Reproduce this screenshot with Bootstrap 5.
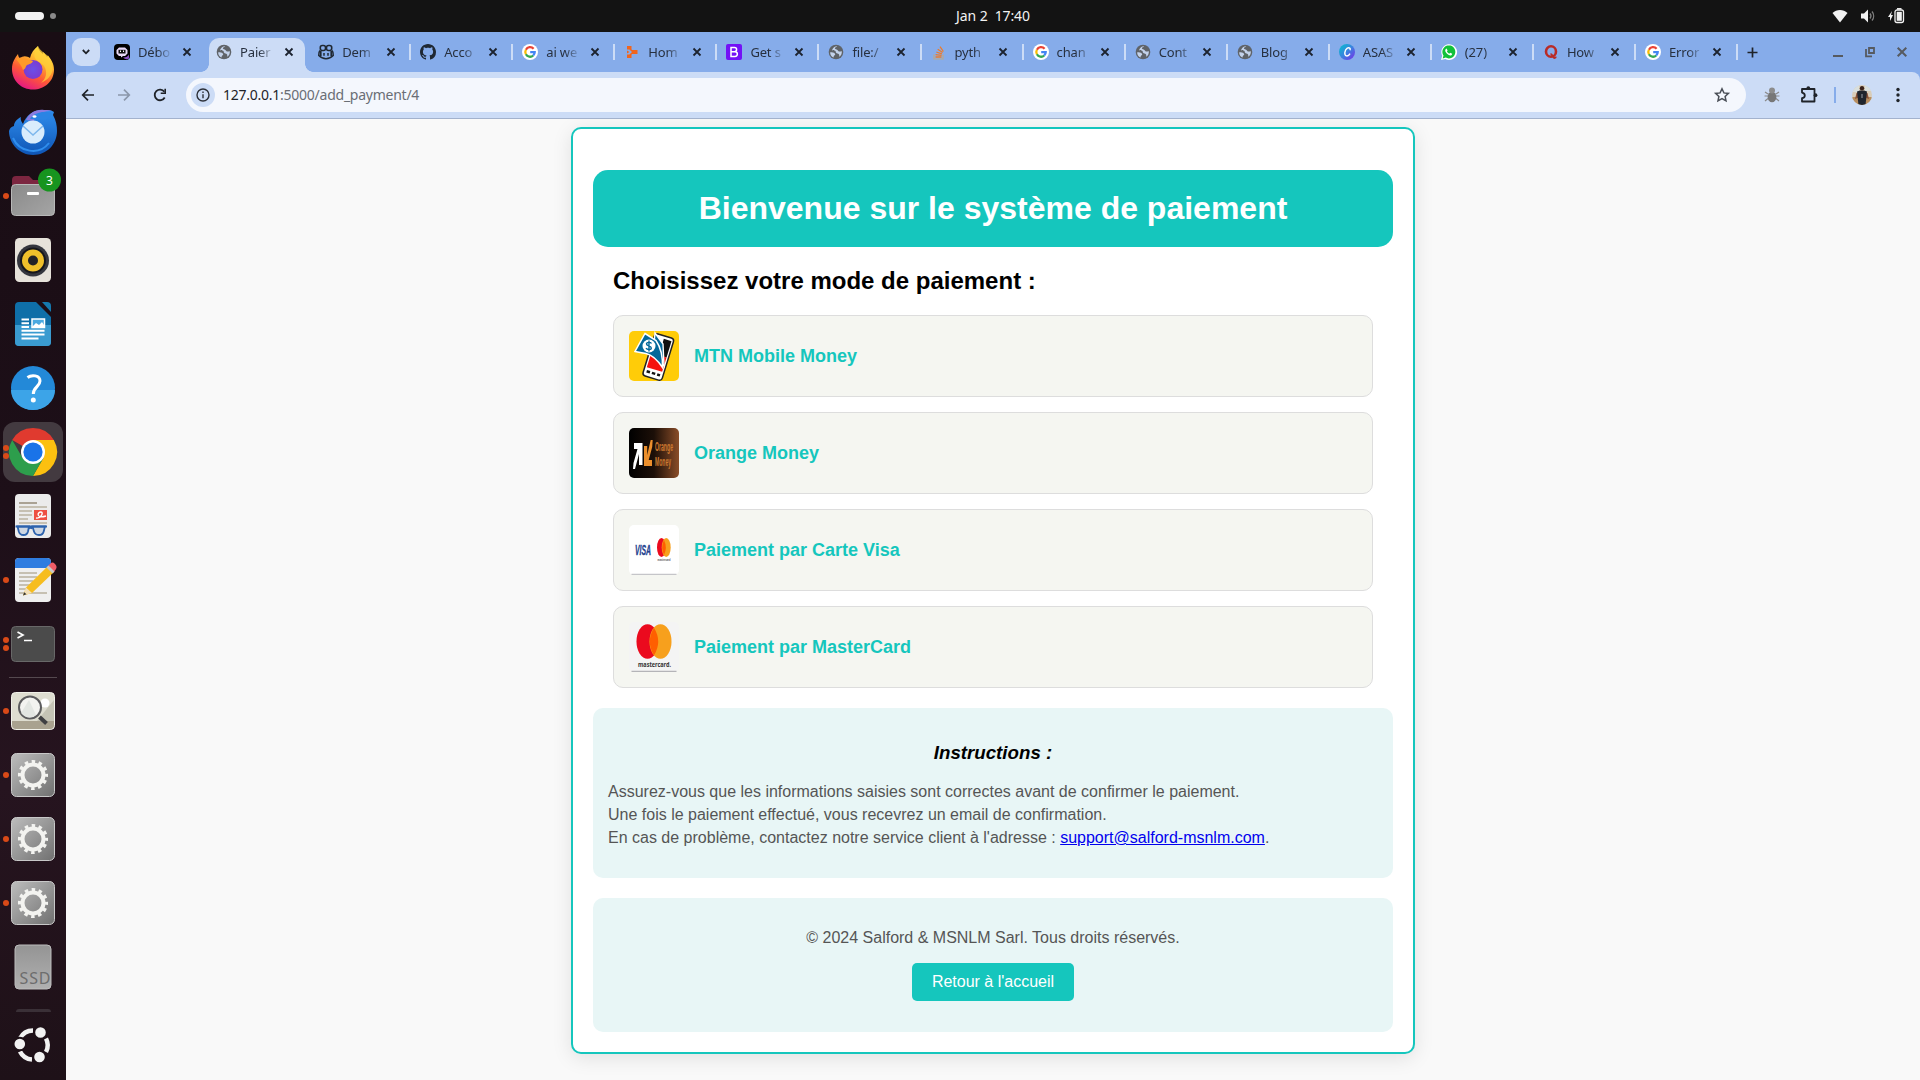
<!DOCTYPE html>
<html lang="fr">
<head>
<meta charset="utf-8">
<meta name="viewport" content="width=device-width, initial-scale=1">
<title>Paiement</title>
<link href="https://cdn.jsdelivr.net/npm/bootstrap@5.3.0/dist/css/bootstrap.min.css" rel="stylesheet">
<style>
  body { width: 1920px; height: 1080px; overflow: hidden; font-family: "Noto Sans", "Open Sans", sans-serif; background: #131313; }
  svg { display: block; flex: none; overflow: visible; }
  .topbar { height: 32px; background: #131313; color: #f2f2f2; font-size: 14px; }
  .topbar .side { width: 300px; }
  .pill { width: 29px; height: 8px; border-radius: 4px; background: #f2f2f2; margin-left: -1px; }
  .pill-dot { width: 6px; height: 6px; border-radius: 50%; background: #8a8a8a; margin-left: 6px; }
  .clock { white-space: pre; letter-spacing: -.1px; padding-bottom: 2px; margin-left: 66px; }
  .status { gap: 12px; padding-right: 16px; }

  .dock { width: 66px; height: 1048px; padding-top: 4px; background: linear-gradient(#190d14, #1d0f18 45%, #26141f 72%, #1e1118); }
  .slot { height: 64px; flex: none; position: relative; }
  .slot.current::before { content: ""; position: absolute; inset: 2px 3px; border-radius: 12px; background: #433a40; }
  .slot svg { position: relative; }
  .run { position: absolute; left: 3px; top: 0; height: 64px; display: flex; flex-direction: column; justify-content: center; gap: 2px; z-index: 2; }
  .run i { width: 6px; height: 6px; border-radius: 50%; background: #d94a18; }
  .dock-line { width: 48px; height: 1px; margin: 1px auto; background: #55494f; flex: none; }
  .dock-peek { width: 35px; height: 3px; margin: 10px auto 0; border-radius: 5px 5px 0 0; background: #3a3037; flex: none; }
  .show-apps { margin-top: 15px; }

  .tabstrip { height: 40px; background: #86acea; }
  .tab-search { width: 28px; height: 28px; border-radius: 9px; background: #ccdcf6; margin-left: 6px; margin-right: 3px; }
  .tab-item { width: 102.07px; height: 40px; padding-left: 11px; position: relative; flex: none; color: #27303f; }
  .tab-item .label { width: 34px; margin-left: 8px; white-space: nowrap; font-size: 13px; letter-spacing: -.15px; line-height: 20px; -webkit-mask-image: linear-gradient(90deg, #000 55%, rgba(0,0,0,.15) 95%); mask-image: linear-gradient(90deg, #000 55%, rgba(0,0,0,.15) 95%); position: relative; }
  .tab-item svg { position: relative; }
  .tab-item .cross { margin-left: 9.5px; }
  .tab-item.ruled::after { content: ""; position: absolute; right: -2px; top: 12px; width: 2px; height: 16px; background: #ccdcf6; }
  .tab-item.front::before { content: ""; position: absolute; left: -4px; right: -6px; top: 6px; bottom: 0;
    background:
      radial-gradient(circle at 0 0, transparent 7.5px, #ccdcf6 8px) left bottom / 8px 8px no-repeat,
      radial-gradient(circle at 100% 0, transparent 7.5px, #ccdcf6 8px) right bottom / 8px 8px no-repeat; }
  .front-fill { position: absolute; left: 4px; right: 2px; top: 6px; bottom: 0; border-radius: 10px 10px 0 0; background: #ccdcf6; }
  .new-tab { margin-left: 11px; }
  .win-buttons { gap: 22px; padding-right: 13px; }
  .toolbar-wrap { background: #86acea; }
  .toolbar { height: 47px; background: #ccdcf6; border-radius: 8px 8px 0 0; border-bottom: 1px solid #a3b2cd; padding-left: 12px; color: #1f2329; }
  .omnibox { width: 1560px; height: 34px; border-radius: 17px; background: #f4f7fd; margin-left: 16px; padding: 0 16px 0 5px; font-size: 14px; }
  .info-badge { width: 24px; height: 24px; border-radius: 50%; background: #ccdcf6; }
  .url { letter-spacing: -.25px; margin-left: 8px; margin-top: -2px; color: #6a6e75; }
  .url b { font-weight: 400; color: #1f2329; }
  .tool-rule { width: 2px; height: 16px; background: #86acea; margin-left: 15px; }

  .viewport { height: 961px; background: #f9f9f9; overflow: hidden; padding-top: 8px; font-family: "Liberation Sans", Arial, sans-serif; color: #000; line-height: 1.44; }
  .pay-card { width: 844px; height: 927px; border: 2px solid #15c6bd; border-radius: 10px; background: #fff; padding: 41px 20px 0; box-shadow: 0 4px 20px rgba(0,0,0,.1); }
  .banner { height: 77px; border-radius: 15px; background: #15c6bd; }
  .banner h1 { font-size: 32px; font-weight: 700; line-height: 37px; }
  .choose { font-size: 24px; font-weight: 700; line-height: 28px; padding: 20px 20px 0; margin: 0 0 20px; }
  .method { height: 82px; border: 1px solid #ddd; border-radius: 10px; background: #f5f6f1; padding: 0 15px; gap: 15px; color: #15c6bd; font-size: 18px; font-weight: 700; text-decoration: none; }
  .method span { padding-top: 2px; }
  .methods { gap: 15px; padding: 0 20px; }
  .panel-soft { border-radius: 10px; background: #e8f6f6; color: #555; font-size: 16px; line-height: 23px; }
  .instructions { height: 170px; padding: 34px 15px 0; margin-top: 20px; }
  .instructions h3 { font-size: 18.72px; font-weight: 700; font-style: italic; color: #000; line-height: 22px; margin-bottom: 16px; }
  .instructions a { color: #0000ee; text-decoration: underline; }
  .page-foot { height: 134px; margin-top: 20px; padding-top: 28px; }
  .btn-home { background: #15c6bd; color: #fff; border: 0; border-radius: 5px; padding: 0; width: 162px; height: 38px; font-size: 16px; line-height: 37px; margin-top: 14px; }
</style>
</head>
<body class="d-flex flex-column">

<svg class="position-absolute" width="0" height="0" aria-hidden="true">
  <defs>
    <linearGradient id="gGrey" x1="0" y1="0" x2="1" y2="1"><stop stop-color="#bdbdbd"/><stop offset="1" stop-color="#707070"/></linearGradient>
    <linearGradient id="gFolder" x1="0" y1="0" x2="1" y2="1"><stop stop-color="#8a8a8a"/><stop offset="1" stop-color="#a5a5a5"/></linearGradient>
    <linearGradient id="gFire" x1=".8" y1="0" x2=".3" y2="1"><stop stop-color="#fff44f"/><stop offset=".35" stop-color="#ffb02e"/><stop offset=".65" stop-color="#ff5a35"/><stop offset="1" stop-color="#e31587"/></linearGradient>
    <radialGradient id="gGlobe"><stop stop-color="#6a4fe8"/><stop offset="1" stop-color="#7b3bd0"/></radialGradient>
    <linearGradient id="gBird" x1="0" y1="0" x2="0" y2="1"><stop stop-color="#2f8eee"/><stop offset="1" stop-color="#0f55b5"/></linearGradient>
    <linearGradient id="gCanva" x1="0" y1="0" x2="1" y2="1"><stop stop-color="#00c4cc"/><stop offset=".5" stop-color="#3b82e0"/><stop offset="1" stop-color="#7d2ae8"/></linearGradient>
    <linearGradient id="gOrange"><stop stop-color="#000"/><stop offset=".5" stop-color="#1c0f08"/><stop offset="1" stop-color="#8a4d28"/></linearGradient>
    <linearGradient id="gSsd" x1="0" y1="0" x2="0" y2="1"><stop stop-color="#949494"/><stop offset="1" stop-color="#b0b0b0"/></linearGradient>
    <clipPath id="cAvatar"><circle cx="10" cy="10" r="10"/></clipPath>

    <symbol id="cross" viewBox="0 0 10 10"><path d="M1.500 1.500l7 7M8.500 1.500l-7 7" stroke="#1c232f" stroke-width="1.800" fill="none"/></symbol>
    <symbol id="globe" viewBox="0 0 16 16"><circle cx="8" cy="8" r="7.300" fill="#5f6368"/><path d="M2.200 8.200c2 0 3.600.2 4.600 1.200.9.900.2 1.700-.6 2.200-.6.400-.5 1.400-.6 2C3.400 12.500 2 10.500 2.200 8.200zM9.200 2.200c-.5 1-2 .8-2.300 1.900-.2.900.9 1.200 1.700 1.400 1.500.3 1.100 1.700 2.300 2 1.200.3 1.900-.5 2.900-.2.300 2.200-.7 4.300-2.500 5.500-.4-.8.400-1.800-.4-2.600-.7-.7-2.200-.3-2.800-1.400-.5-1-.1-1.600-1-2.100-.9-.4-2.100.1-3-.7C5 3.600 7 2 9.200 2.200z" fill="#c3d2ea"/></symbol>
    <symbol id="google" viewBox="0 0 16 16"><circle cx="8" cy="8" r="8" fill="#fff"/><g fill="none" stroke-width="2.300"><path d="M11.600 4.800A4.700 4.700 0 0 0 3.900 5.700" stroke="#ea4335"/><path d="M3.900 5.700a4.700 4.700 0 0 0 0 4.600" stroke="#fbbc05"/><path d="M3.900 10.300a4.700 4.700 0 0 0 7.300 1.200" stroke="#34a853"/><path d="M11.200 11.500A4.700 4.700 0 0 0 12.700 8.200H8.200" stroke="#4285f4"/></g></symbol>
    <symbol id="gear" viewBox="0 0 44 44"><rect x=".5" y=".5" width="43" height="43" rx="5" fill="url(#gGrey)" stroke="#c8c8c8"/><circle cx="22" cy="22" r="10.500" fill="none" stroke="#f3f3f0" stroke-width="4"/><circle cx="22" cy="22" r="13.400" fill="none" stroke="#f3f3f0" stroke-width="3.300" stroke-dasharray="3.508 3.508" stroke-dashoffset="1.750"/></symbol>
  </defs>
</svg>

<header class="topbar d-flex align-items-center justify-content-between flex-shrink-0">
  <div class="side d-flex align-items-center ps-3"><span class="pill"></span><span class="pill-dot"></span></div>
  <div class="clock">Jan 2  17:40</div>
  <div class="side status d-flex align-items-center justify-content-end">
    <svg width="16" height="16" viewBox="0 0 16 16"><path d="M8 14.500L.5 5C4.500 1 11.500 1 15.500 5z" fill="#f2f2f2"/></svg>
    <svg width="16" height="16" viewBox="0 0 16 16"><path d="M1 5.500h3L8 1.500v13l-4-4H1z" fill="#f2f2f2"/><path d="M10 5.500a4 4 0 0 1 0 5M12 3.500a7 7 0 0 1 0 9" stroke="#808080" stroke-width="1.300" fill="none"/></svg>
    <svg width="16" height="16" viewBox="0 0 16 16"><path d="M4 3L0 9h2v4l3-6H3z" fill="#f2f2f2"/><rect x="7" y="2" width="8.500" height="12.500" rx="2" fill="none" stroke="#f2f2f2" stroke-width="1.300"/><rect x="8.700" y="3.800" width="5.100" height="9" fill="#f2f2f2"/><path d="M9 .8h4.500" stroke="#f2f2f2" stroke-width="1.500"/></svg>
  </div>
</header>

<div class="d-flex">
  <aside class="dock d-flex flex-column flex-shrink-0">
    <div class="slot d-flex align-items-center justify-content-center">
      <svg width="44" height="44" viewBox="0 0 44 44"><path d="M1 23C1 16 4 12 7 8c.2 2 1 3.500 2 4.500C12 9 16 10 19 12c1-5 4-9 8-12 0 4 3 6 5 8l.5-2c1 2 2.500 3 3.500 5l1-1.500c3 4 6 8 6 14 0 12-9.500 20-21 20S1 35 1 23z" fill="url(#gFire)"/><circle cx="22" cy="23.500" r="9.500" fill="url(#gGlobe)"/><path d="M5 13c4-2 8-2 10 0l7 2c-1 3-4 3-6 4-2 2-1 4-4 5-1-4-4-7-7-11z" fill="#ff9a28"/><path d="M24 6c-3 8 5 9 9 14 4 6 2 13-3 17 13-6 15-17 7-27-3-3-8-5-10-10z" fill="#ffd23a" opacity=".75"/></svg>
    </div>
    <div class="slot d-flex align-items-center justify-content-center">
      <svg width="48" height="48" viewBox="0 0 48 48"><path d="M0 23c1-3 2-4 5-5 0-4 3-7 7-9-1 3 1 5 2 7C17 7 25 1 35 2c4 0 7 0 10 2l-1 3c3 5 4 11 4 16 0 13-10 24-24 24C11 47 0 36 0 23z" fill="url(#gBird)"/><path d="M17 12C20 5 27 1 35 2c3 0 6 0 8 1-10-1-17 5-18 10z" fill="#8a7be0"/><path d="M21 11C24 6 30 4 35 4c3 0 6 0 8 1l-1 3-6 4z" fill="#2a84e4"/><circle cx="24" cy="24" r="11.500" fill="#d9ecfc"/><path d="M14 18l10 9 10-9" fill="none" stroke="#7db7ec" stroke-width="1.500"/><ellipse cx="25.500" cy="8.500" rx="2" ry="1.200" fill="#fff"/><path d="M4 30c6 14 26 18 36 5" stroke="#2f8eee" stroke-width="2" fill="none"/></svg>
    </div>
    <div class="slot d-flex align-items-center justify-content-center"><span class="run"><i></i></span>
      <svg width="44" height="44" viewBox="0 0 44 44"><path d="M1 6q0-4 4-4h13l4 4h17q4 0 4 4v14H1z" fill="#7c2640"/><rect x=".5" y="10.500" width="43" height="31" rx="4" fill="url(#gFolder)" stroke="#b8b8b8"/><rect x="16" y="18" width="12" height="3" rx="1" fill="#fff"/><circle cx="38.500" cy="6" r="11.500" fill="#17941f"/><text x="38.500" y="10.500" font-size="12" fill="#fff" text-anchor="middle">3</text></svg>
    </div>
    <div class="slot d-flex align-items-center justify-content-center">
      <svg width="38" height="46" viewBox="0 0 38 46"><rect x="1" y="1" width="36" height="44" rx="4.500" fill="#e6e2da"/><circle cx="19" cy="23.500" r="16" fill="#34363e"/><circle cx="19" cy="23.500" r="12" fill="#efc02b" stroke="#16171c" stroke-width="2"/><circle cx="19" cy="23.500" r="5" fill="#222226"/></svg>
    </div>
    <div class="slot d-flex align-items-center justify-content-center">
      <svg width="38" height="46" viewBox="0 0 38 46"><path d="M1 5q0-4 4-4h17l15 15v25q0 4-4 4H5q-4 0-4-4z" fill="#0f6fa8"/><path d="M1 24h36v17q0 4-4 4H5q-4 0-4-4z" fill="#3a9bd0"/><path d="M28 1h5q4 0 4 4v6z" fill="#1579ae"/><path d="M7.500 18.500H15M7.500 22.300H15M7.500 26H15M7.500 29.800h23M7.500 33.500h23M7.500 37.500h17" stroke="#fff" stroke-width="1.900"/><rect x="18" y="18" width="12.500" height="8.500" fill="#4ba9e0" stroke="#fff" stroke-width="1.500"/><path d="M18 26l4-4 3 2 3-3 2 3v2z" fill="#fff"/></svg>
    </div>
    <div class="slot d-flex align-items-center justify-content-center">
      <svg width="44" height="44" viewBox="0 0 44 44"><circle cx="22" cy="22" r="22" fill="#2389d8"/><path d="M0 24a22 20 0 0 0 44 0z" fill="#3ca4e8"/><path d="M16.500 11.500c4-3 12.500-2.500 12.500 3.500 0 5.500-6.700 6-6.700 13" stroke="#fff" stroke-width="3" fill="none"/><circle cx="22.300" cy="34" r="2.500" fill="#fff"/></svg>
    </div>
    <div class="slot current d-flex align-items-center justify-content-center"><span class="run"><i></i><i></i></span>
      <svg width="48" height="48" viewBox="0 0 48 48"><path d="M24 24L3.200 12a24 24 0 0 1 41.600 0z" fill="#e03a2f"/><path d="M24 12h20.800A24 24 0 0 1 24 48L34.400 30z" fill="#fcc010"/><path d="M34.400 30L24 48A24 24 0 0 1 3.200 12l10.400 18z" fill="#2d9e4c"/><circle cx="24" cy="24" r="12" fill="#fff"/><circle cx="24" cy="24" r="9.600" fill="#1a73e8"/></svg>
    </div>
    <div class="slot d-flex align-items-center justify-content-center">
      <svg width="38" height="46" viewBox="0 0 38 46"><rect x="1" y="1" width="36" height="44" rx="4" fill="#ebebeb"/><path d="M5 10h18" stroke="#aaa294" stroke-width="2"/><path d="M5 14h28M5 18h13M5 22h13M5 26h9M5 30h28" stroke="#c6c0b2" stroke-width="2"/><rect x="20" y="17" width="13" height="10" fill="#ee4f42"/><path d="M22 25c5 1 8-6 5-6-4 0-5 7 5 4" stroke="#fff" stroke-width="1.400" fill="none"/><g fill="#cdd6e2" stroke="#2c62ad" stroke-width="1.800"><path d="M3.500 33.500h11.500l-1 5q-.8 3.500-4.500 3.500t-4.700-3.500z"/><path d="M18.500 33.500H31l-1.300 5q-.8 3.500-4.700 3.500t-5-3.500z"/><path d="M1.500 33.500h31.500M15 35.500q1.800-1.500 3.500 0" fill="none"/></g></svg>
    </div>
    <div class="slot d-flex align-items-center justify-content-center"><span class="run"><i></i></span>
      <svg width="38" height="46" viewBox="0 0 38 46"><rect x="1" y="1" width="36" height="44" rx="4" fill="#efefef"/><path d="M1 11V5q0-4 4-4h28q4 0 4 4v6z" fill="#2f7de0"/><path d="M5 16h18M5 20h18M5 24h14M5 28h14M5 32h7M5 36h28" stroke="#c6c0b2" stroke-width="1.800"/><path d="M9 38.500l3-8L34 9l6 6-22 21z" fill="#f6bd1f"/><path d="M9 38.500l3-8 6 5.500z" fill="#f3dfb8"/><path d="M9 38.500l1.200-3.300 2.300 2z" fill="#333"/><path d="M34 9l2.500-2.500q2-2 4.500.5t1 5L40 15z" fill="#ef5d68"/><path d="M32.500 10.500l6 6 2-2-6-6z" fill="#c9c9c9"/></svg>
    </div>
    <div class="slot d-flex align-items-center justify-content-center"><span class="run"><i></i><i></i></span>
      <svg width="44" height="36" viewBox="0 0 44 36"><rect x=".5" y=".5" width="43" height="35" rx="4" fill="#4b4b4b" stroke="#686868"/><path d="M6.500 6l5.500 3-5.500 3M13 14.500h8" stroke="#fff" stroke-width="1.700" fill="none"/></svg>
    </div>
    <div class="dock-line"></div>
    <div class="slot d-flex align-items-center justify-content-center"><span class="run"><i></i></span>
      <svg width="44" height="38" viewBox="0 0 44 38"><rect x=".5" y=".5" width="43" height="37" rx="4" fill="#deddd0" stroke="#f0f0e8"/><path d="M26 29L43 8v21z" fill="#c5c4b5"/><path d="M1 29h42v4q0 4-4 4H5q-4 0-4-4z" fill="#a9a28f"/><circle cx="34" cy="11" r="4.500" fill="#fff"/><circle cx="19" cy="15.500" r="11" fill="#f3f3f0" stroke="#5c5c5e" stroke-width="2"/><path d="M10 21l8-13 7 15q-8 6-15-2z" fill="#e3e6e2"/><path d="M28.500 25l7 6.500" stroke="#3f3f42" stroke-width="4"/></svg>
    </div>
    <div class="slot d-flex align-items-center justify-content-center"><span class="run"><i></i></span><svg width="44" height="44"><use href="#gear"/></svg></div>
    <div class="slot d-flex align-items-center justify-content-center"><span class="run"><i></i></span><svg width="44" height="44"><use href="#gear"/></svg></div>
    <div class="slot d-flex align-items-center justify-content-center"><span class="run"><i></i></span><svg width="44" height="44"><use href="#gear"/></svg></div>
    <div class="slot d-flex align-items-center justify-content-center">
      <svg width="38" height="46" viewBox="0 0 38 46"><rect x="1" y="1" width="36" height="44" rx="4" fill="url(#gSsd)" stroke="#bcbcbc"/><text x="5.500" y="39.500" font-size="16" textLength="31" fill="#6d6d6d">SSD</text></svg>
    </div>
    <div class="dock-peek"></div>
    <svg class="show-apps mx-auto" width="36" height="36" viewBox="0 0 36 36"><g fill="none" stroke="#f2f2f2" stroke-width="4.500"><path d="M5 11.500A14.500 14.500 0 0 1 18 3.500"/><path d="M31 11.500A14.500 14.500 0 0 1 31 25"/><path d="M5 24.500a14.500 14.500 0 0 0 12 8"/></g><circle cx="25.500" cy="5.500" r="6.300" fill="#f2f2f2" stroke="#1e1118" stroke-width="2"/><circle cx="4.800" cy="17" r="6.300" fill="#f2f2f2" stroke="#1e1118" stroke-width="2"/><circle cx="24.500" cy="30" r="6.300" fill="#f2f2f2" stroke="#1e1118" stroke-width="2"/></svg>
  </aside>

  <div class="flex-grow-1">
    <div class="tabstrip d-flex align-items-center">
      <div class="tab-search d-flex align-items-center justify-content-center"><svg width="8" height="6" viewBox="0 0 8 6"><path d="M.8 1L4 4.300 7.200 1" stroke="#1f2329" stroke-width="1.800" fill="none"/></svg></div>

      <div class="tab-item d-flex align-items-center"><svg width="16" height="16" viewBox="0 0 16 16"><rect width="16" height="16" rx="4" fill="#000"/><path d="M5 3.500h6l2.500 2.500v3.500L11 12H9l-2 1.500V12H5L2.500 9.500V6z" fill="#e9d9f7"/><rect x="4.500" y="5.800" width="7" height="3.700" fill="#111"/><path d="M6.500 6.500v1.500M9.500 6.500v1.500" stroke="#fff"/><path d="M9 13.500q4 .5 6-3v4q-3 2-6-1z" fill="#8b50c5"/></svg><span class="label">Débo</span><svg class="cross" width="10" height="10"><use href="#cross"/></svg></div>
      <div class="tab-item front d-flex align-items-center"><span class="front-fill"></span><svg width="16" height="16"><use href="#globe"/></svg><span class="label">Paier</span><svg class="cross" width="10" height="10"><use href="#cross"/></svg></div>
      <div class="tab-item ruled d-flex align-items-center"><svg width="16" height="16" viewBox="0 0 16 16"><g fill="none" stroke="#1f2833" stroke-width="1.600"><rect x="2.300" y="1.500" width="5.200" height="5" rx="2"/><rect x="8.500" y="1.500" width="5.200" height="5" rx="2"/><path d="M2 6.500Q.6 8 .8 11.500 4 14.700 8 14.700t7.200-3.200Q15.400 8 14 6.500M2.800 7v5M13.200 7v5"/></g><path d="M6 9v2.800M10 9v2.800" stroke="#1f2833" stroke-width="1.500"/></svg><span class="label">Dem</span><svg class="cross" width="10" height="10"><use href="#cross"/></svg></div>
      <div class="tab-item ruled d-flex align-items-center"><svg width="16" height="16" viewBox="0 0 16 16"><path fill="#1f2833" d="M8 0C3.580 0 0 3.580 0 8c0 3.540 2.290 6.530 5.470 7.590.4.070.55-.17.55-.38 0-.19-.01-.82-.01-1.490-2.010.37-2.530-.49-2.690-.94-.09-.23-.48-.94-.82-1.130-.28-.15-.68-.52-.01-.53.63-.01 1.080.58 1.230.82.72 1.210 1.870.87 2.330.66.07-.52.28-.87.51-1.070-1.780-.2-3.640-.89-3.640-3.950 0-.87.31-1.590.82-2.150-.08-.2-.36-1.020.08-2.120 0 0 .67-.21 2.200.82.64-.18 1.320-.27 2-.27s1.360.09 2 .27c1.530-1.040 2.200-.82 2.200-.82.44 1.100.16 1.920.08 2.120.51.56.82 1.270.82 2.150 0 3.070-1.870 3.750-3.650 3.950.29.25.54.73.54 1.480 0 1.070-.01 1.930-.01 2.200 0 .21.15.46.55.38A8.010 8.010 0 0 0 16 8c0-4.420-3.580-8-8-8z"/></svg><span class="label">Acco</span><svg class="cross" width="10" height="10"><use href="#cross"/></svg></div>
      <div class="tab-item ruled d-flex align-items-center"><svg width="16" height="16"><use href="#google"/></svg><span class="label">ai we</span><svg class="cross" width="10" height="10"><use href="#cross"/></svg></div>
      <div class="tab-item ruled d-flex align-items-center"><svg width="16" height="16" viewBox="0 0 16 16"><path d="M3 2h4.500v3.500H3zM3 6.500l2.500 1.500L3 9.500M8 6h5.500v4H8zM3 10.500h4.500V14H3z" fill="#f0651e"/><path d="M6 5l3 3-3 3" fill="none" stroke="#f0651e" stroke-width="1.500"/></svg><span class="label">Hom</span><svg class="cross" width="10" height="10"><use href="#cross"/></svg></div>
      <div class="tab-item ruled d-flex align-items-center"><svg width="16" height="16" viewBox="0 0 16 16"><rect width="16" height="16" rx="2" fill="#7311f6"/><path d="M5 3.500h3.500a2 2 0 0 1 0 4.200H5zM5 7.700h4a2.300 2.300 0 0 1 0 4.700H5z" fill="none" stroke="#fff" stroke-width="1.500"/></svg><span class="label">Get s</span><svg class="cross" width="10" height="10"><use href="#cross"/></svg></div>
      <div class="tab-item ruled d-flex align-items-center"><svg width="16" height="16"><use href="#globe"/></svg><span class="label">file:/</span><svg class="cross" width="10" height="10"><use href="#cross"/></svg></div>
      <div class="tab-item ruled d-flex align-items-center"><svg width="16" height="16" viewBox="0 0 16 16"><path d="M3 10.500V15h9v-4.500" stroke="#b9a98c" stroke-width="1.200" fill="none"/><path d="M4.500 13h6M4.600 10.600l6 .7M5.300 8l5.600 1.800M6.700 5.200l4.900 3.300M9 2.600l3.400 4.900" stroke="#ee7b29" stroke-width="1.300"/></svg><span class="label">pyth</span><svg class="cross" width="10" height="10"><use href="#cross"/></svg></div>
      <div class="tab-item ruled d-flex align-items-center"><svg width="16" height="16"><use href="#google"/></svg><span class="label">chan</span><svg class="cross" width="10" height="10"><use href="#cross"/></svg></div>
      <div class="tab-item ruled d-flex align-items-center"><svg width="16" height="16"><use href="#globe"/></svg><span class="label">Cont</span><svg class="cross" width="10" height="10"><use href="#cross"/></svg></div>
      <div class="tab-item ruled d-flex align-items-center"><svg width="16" height="16"><use href="#globe"/></svg><span class="label">Blog</span><svg class="cross" width="10" height="10"><use href="#cross"/></svg></div>
      <div class="tab-item ruled d-flex align-items-center"><svg width="16" height="16" viewBox="0 0 16 16"><circle cx="8" cy="8" r="8" fill="url(#gCanva)"/><path d="M11 6.300c.8-1.800-.6-3.300-2.700-2.200-2.700 1.700-3.500 7-.9 7.800 1.600.3 2.900-.9 3.600-2.200" fill="none" stroke="#fff" stroke-width="1.400"/></svg><span class="label">ASAS</span><svg class="cross" width="10" height="10"><use href="#cross"/></svg></div>
      <div class="tab-item ruled d-flex align-items-center"><svg width="16" height="16" viewBox="0 0 16 16"><path d="M0 16l1.200-4.200A7.900 7.900 0 1 1 4.300 15z" fill="#fff"/><path d="M1.700 14.400l.8-2.800a6.500 6.500 0 1 1 2.200 2z" fill="#12c13a"/><path d="M5.600 4.500l1 2-.7 1c.6 1 1.300 1.700 2.400 2.200l.9-.9 2 .9c-.2 2-2 2-3.400 1.300-1.500-.7-2.700-2-3.400-3.500-.4-1-.1-2.500 1.200-3z" fill="#fff"/></svg><span class="label">(27)</span><svg class="cross" width="10" height="10"><use href="#cross"/></svg></div>
      <div class="tab-item ruled d-flex align-items-center"><svg width="16" height="16" viewBox="0 0 16 16"><ellipse cx="8" cy="7.500" rx="5" ry="5.200" fill="none" stroke="#b92b27" stroke-width="2.600"/><path d="M7.500 10c2 0 2.500 4 4 4 1 0 1.300-.6 1.400-1.300" fill="none" stroke="#b92b27" stroke-width="1.900"/></svg><span class="label">How</span><svg class="cross" width="10" height="10"><use href="#cross"/></svg></div>
      <div class="tab-item ruled d-flex align-items-center"><svg width="16" height="16"><use href="#google"/></svg><span class="label">Error</span><svg class="cross" width="10" height="10"><use href="#cross"/></svg></div>
      <svg class="new-tab" width="11" height="11" viewBox="0 0 11 11"><path d="M5.500 .5v10M.5 5.500h10" stroke="#1f2329" stroke-width="1.700"/></svg>
      <div class="win-buttons d-flex align-items-center ms-auto">
        <svg width="10" height="10" viewBox="0 0 10 10"><path d="M0 9h10" stroke="#565a60" stroke-width="2"/></svg>
        <svg width="10" height="10" viewBox="0 0 10 10"><path d="M4 1h5v5H4zM1 2v7.300h6" stroke="#565a60" stroke-width="1.800" fill="none"/></svg>
        <svg width="10" height="10" viewBox="0 0 10 10"><path d="M.7 .7l8.600 8.600M9.300 .7L.7 9.300" stroke="#565a60" stroke-width="2"/></svg>
      </div>
    </div>

    <div class="toolbar-wrap"><div class="toolbar d-flex align-items-center">
      <div class="d-flex align-items-center gap-3">
        <svg width="20" height="20" viewBox="0 0 20 20"><path d="M16 10H5M10 4.700L4.700 10l5.300 5.300" stroke="#1f2329" stroke-width="1.700" fill="none"/></svg>
        <svg width="20" height="20" viewBox="0 0 20 20"><path d="M4 10h11M10 4.700L15.300 10 10 15.300" stroke="#8b97ab" stroke-width="1.700" fill="none"/></svg>
        <svg width="20" height="20" viewBox="0 0 20 20"><path d="M14.700 12.500A5.300 5.300 0 1 1 14.300 6.800" stroke="#1f2329" stroke-width="1.800" fill="none"/><path d="M16 3.700V9h-5.300V7.400h3.700V3.700z" fill="#1f2329"/></svg>
      </div>
      <div class="omnibox d-flex align-items-center">
        <span class="info-badge d-flex align-items-center justify-content-center"><svg width="14" height="14" viewBox="0 0 14 14"><circle cx="7" cy="7" r="6" fill="none" stroke="#2c3038" stroke-width="1.400"/><path d="M7 6.200v4M7 3.500v1.500" stroke="#2c3038" stroke-width="1.400"/></svg></span>
        <span class="url"><b>127.0.0.1</b>:5000/add_payment/4</span>
        <svg class="ms-auto" width="16" height="16" viewBox="0 0 16 16"><path d="M8 1.800l1.900 4.100 4.500.5-3.300 3 .9 4.500L8 11.600l-4 2.300.9-4.500-3.300-3 4.500-.5z" fill="none" stroke="#4a4f57" stroke-width="1.500"/></svg>
      </div>
      <svg style="margin-left:18px" width="16" height="16" viewBox="0 0 16 16"><path d="M1 5l3 2M15 5l-3 2M.5 9H4M15.500 9H12M1 14l3-2.500M15 14l-3-2.500" stroke="#8a8a8a" stroke-width="1.200"/><ellipse cx="8" cy="10" rx="4.400" ry="5.300" fill="#777"/><circle cx="8" cy="3.500" r="3" fill="#8c8c8c"/></svg>
      <svg style="margin-left:19px" width="20" height="20" viewBox="0 0 20 20"><path d="M3 4h12.500V16.500H3v-3.400q2.800-.4 2.800-2.700T3 7.600z" fill="none" stroke="#1f2329" stroke-width="1.800" stroke-linejoin="round"/><circle cx="9.300" cy="3.200" r="1.900" fill="#1f2329"/><circle cx="16.500" cy="10.200" r="1.900" fill="#1f2329"/></svg>
      <span class="tool-rule"></span>
      <svg style="margin-left:16px" width="20" height="20" viewBox="0 0 20 20"><g clip-path="url(#cAvatar)"><path fill="#d9cdb9" d="M0 0h20v20H0z"/><path fill="#b78e60" d="M0 12h20v8H0z"/><path fill="#d9dfdd" d="M0 0h7v7H0zM13 0h7v6h-7z"/><path fill="#8a5236" d="M4.500 8h11l1.500 6-2.500-1h-9L3 14z"/><path fill="#20252d" d="M5 6.500l3-1h4l3 1-1.500 13.500h-7z"/><circle cx="10" cy="3.200" r="2.200" fill="#3a221a"/><path d="M10 9v4" stroke="#9aa0a8"/></g></svg>
      <svg style="margin-left:17px" width="20" height="20" viewBox="0 0 20 20" fill="#1f2329"><circle cx="9" cy="4.500" r="1.700"/><circle cx="9" cy="10" r="1.700"/><circle cx="9" cy="15.500" r="1.700"/></svg>
    </div></div>

    <main class="viewport">
      <div class="pay-card mx-auto">
        <div class="banner d-flex align-items-center justify-content-center text-white"><h1 class="m-0">Bienvenue sur le système de paiement</h1></div>
        <h2 class="choose">Choisissez votre mode de paiement :</h2>
        <div class="methods d-flex flex-column">
          <a class="method d-flex align-items-center" href="#">
            <svg width="50" height="50" viewBox="0 0 50 50"><rect width="50" height="50" rx="5" fill="#ffcc08"/><g transform="rotate(17 29 27)"><rect x="19" y="4" width="20" height="44" rx="3" fill="#fff" stroke="#222" stroke-width="1.500"/><path d="M29 7h8v17h-8z" fill="#111"/><path d="M21 24h16v15H21z" fill="#f5130f"/><path d="M22 43h3.500M27.500 43h3.500M33 43h3" stroke="#111" stroke-width="2.500"/></g><path d="M26 2l8 11 1 22-11-12z" fill="#04689a" stroke="#fff" stroke-width="1.400"/><path d="M16 2.500l11 7q7 10 6.500 27-8-12-16.500-14-6-1-11-2z" fill="#04689a" stroke="#fff" stroke-width="1.500"/><circle cx="20" cy="15" r="6.500" fill="#fff"/><path d="M22.500 12.500c-1-1.600-5-1.500-5 .5 0 2.200 4.800 1.500 4.800 4 0 2-4 2.200-5.300.2M20 9.500v11" fill="none" stroke="#04689a" stroke-width="1.400"/></svg>
            <span>MTN Mobile Money</span></a>
          <a class="method d-flex align-items-center" href="#">
            <svg width="50" height="50" viewBox="0 0 50 50"><rect width="50" height="50" rx="5" fill="url(#gOrange)"/><path d="M5 15.500h8v21h-2.500V24L5.500 40.500" fill="none"/><path d="M5 15h8.500v22h-3.500v-11L6 41H4l.5-6 4-14H5z" fill="#fff"/><path d="M15 38V18h3.200v9l3.500-15h2l-.5 7-3.500 13H23v6z" fill="#ec8f2c"/><g fill="#cf7a30" font-family="Liberation Sans, sans-serif" font-size="12" font-weight="700"><text x="26" y="22.500" textLength="18" lengthAdjust="spacingAndGlyphs">Orange</text><text x="26" y="37.500" textLength="16" lengthAdjust="spacingAndGlyphs">Money</text></g></svg>
            <span>Orange Money</span></a>
          <a class="method d-flex align-items-center" href="#">
            <svg width="50" height="50" viewBox="0 0 50 50"><rect width="50" height="50" rx="5" fill="#fff"/><path d="M2.500 49.300h45" stroke="#c5c5c9" stroke-width="1.200"/><text x="6" y="30" font-family="Liberation Sans, sans-serif" font-size="15.500" font-weight="700" font-style="italic" fill="#24428f" stroke="#24428f" stroke-width=".4" textLength="16" lengthAdjust="spacingAndGlyphs">VISA</text><ellipse cx="32.500" cy="22.500" rx="4.500" ry="9.500" fill="#eb0a1e"/><ellipse cx="37.200" cy="22.500" rx="4.500" ry="9.500" fill="#f7a01d"/><path d="M35 15q3.600 7.500 0 15-3.600-7.500 0-15z" fill="#ff5f00"/><text x="28.500" y="36" font-size="4" fill="#555" textLength="13" lengthAdjust="spacingAndGlyphs">mastercard</text></svg>
            <span>Paiement par Carte Visa</span></a>
          <a class="method d-flex align-items-center" href="#">
            <svg width="50" height="50" viewBox="0 0 50 50"><rect width="50" height="50" rx="5" fill="#f4f4f4"/><path d="M2.500 49.300h45" stroke="#b4b4b8" stroke-width="1.200"/><ellipse cx="18.500" cy="19.500" rx="11" ry="17.200" fill="#eb0a1e"/><ellipse cx="31.500" cy="19.500" rx="11" ry="17.200" fill="#f7a01d"/><path d="M25 5.700q8.400 13.800 0 27.600-8.400-13.800 0-27.600z" fill="#ff5f00"/><text x="9" y="45" font-family="Noto Sans, sans-serif" font-size="7.500" font-weight="700" fill="#333" textLength="33" lengthAdjust="spacingAndGlyphs">mastercard.</text></svg>
            <span>Paiement par MasterCard</span></a>
        </div>
        <section class="panel-soft instructions">
          <h3 class="text-center">Instructions :</h3>
          <div>Assurez-vous que les informations saisies sont correctes avant de confirmer le paiement.</div>
          <div>Une fois le paiement effectué, vous recevrez un email de confirmation.</div>
          <div>En cas de problème, contactez notre service client à l'adresse : <a href="#">support@salford-msnlm.com</a>.</div>
        </section>
        <footer class="panel-soft page-foot d-flex flex-column align-items-center">
          <div>© 2024 Salford &amp; MSNLM Sarl. Tous droits réservés.</div>
          <a class="btn btn-home" href="#">Retour à l'accueil</a>
        </footer>
      </div>
    </main>
  </div>
</div>
<script src="https://cdn.jsdelivr.net/npm/bootstrap@5.3.0/dist/js/bootstrap.bundle.min.js"></script>
</body>
</html>
